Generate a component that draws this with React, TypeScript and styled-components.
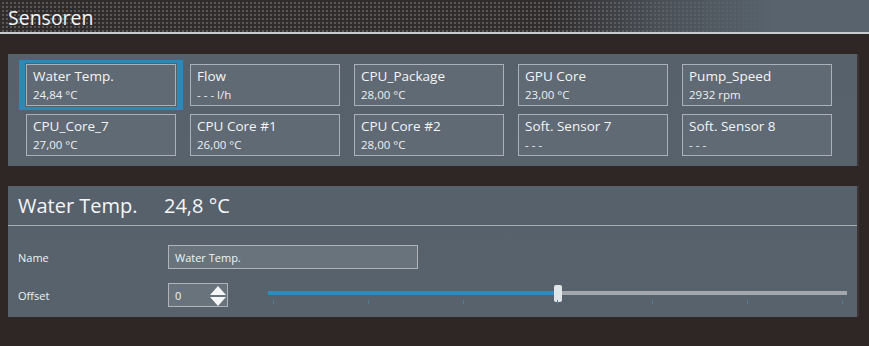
import styled, { createGlobalStyle } from 'styled-components';

const GlobalStyle = createGlobalStyle`
  html, body {
    margin: 0;
    padding: 0;
    background: #2f2725;
  }
  body {
    font-family: "Open Sans", "Noto Sans", sans-serif;
    color: #f2f4f5;
  }
`;

const Page = styled.div`
  width: 869px;
  height: 346px;
  overflow: hidden;
  background: #2f2725;
`;

const TitleBar = styled.div`
  box-sizing: border-box;
  height: 32px;
  border-bottom: 2px solid #c6cbce;
  display: flex;
  align-items: center;
  padding: 3px 0 0 8px;
  font-size: 19.5px;
  color: #f4f5f6;
  background-color: #5b5858;
  background-image:
    linear-gradient(to right, rgba(88, 99, 109, 0) 63%, rgba(88, 99, 109, 0.65) 76%, #58636d 89%),
    linear-gradient(to right, #302c2c 0 2px, transparent 2px),
    linear-gradient(to bottom, #302c2c 0 2px, transparent 2px);
  background-size: 100% 100%, 4px 4px, 4px 4px;
  height: 34px;
`;

const Content = styled.div`
  padding: 20px 12px 0 8px;
  display: flex;
  flex-direction: column;
  gap: 20px;
`;

const Panel = styled.section`
  background: linear-gradient(#56616b, #58626c);
  box-shadow: 2px 0 0 #3a3534;
`;

const SensorGrid = styled.div`
  display: grid;
  grid-template-columns: repeat(5, 150px);
  grid-auto-rows: 42px;
  column-gap: 14px;
  row-gap: 8px;
  padding: 10px 0 10px 18px;
`;

const Tile = styled.div<{ $selected?: boolean }>`
  box-sizing: border-box;
  border: 1px solid #a9b0b7;
  background: #606a74;
  padding: 2px 0 0 6px;
  display: flex;
  flex-direction: column;
  box-shadow: ${({ $selected }) =>
    $selected
      ? '0 0 0 1px #56616b, 0 0 0 4px #2d88b6, -3px 0 0 4px #2d88b6, 3px 0 0 4px #2d88b6'
      : 'none'};
`;

const TileName = styled.span`
  font-size: 13.5px;
  line-height: 19px;
  color: #f3f5f6;
`;

const TileValue = styled.span`
  font-size: 11.5px;
  line-height: 18px;
  color: #eef1f3;
`;

const DetailHeader = styled.div`
  height: 38px;
  border-bottom: 1px solid #a6adb3;
  display: flex;
  align-items: center;
  padding: 0 0 1px 10px;
  font-size: 20px;
  color: #f5f6f7;
`;

const HeaderName = styled.span`
  width: 146px;
`;

const Form = styled.div`
  display: grid;
  grid-template-columns: 150px 1fr;
  grid-auto-rows: 24px;
  row-gap: 14px;
  align-items: center;
  padding: 19px 10px 10px 10px;
`;

const Label = styled.span`
  font-size: 11px;
  color: #eef1f3;
`;

const TextField = styled.div<{ $width: number }>`
  box-sizing: border-box;
  width: ${({ $width }) => $width}px;
  height: 24px;
  border: 1px solid #aeb4ba;
  background: #69737c;
  display: flex;
  align-items: center;
  padding-left: 6px;
  font-size: 11px;
  color: #f2f4f5;
  position: relative;
`;

const OffsetRow = styled.div`
  display: flex;
  align-items: center;
  gap: 40px;
`;

const Spinner = styled.div`
  position: absolute;
  right: 1px;
  top: 2px;
  display: flex;
  flex-direction: column;
  gap: 2px;
`;

const Slider = styled.div`
  flex: 1;
  position: relative;
  height: 24px;
`;

const Track = styled.div`
  position: absolute;
  left: 0;
  right: 0;
  top: 8px;
  height: 4px;
  background: #a3a7ab;
`;

const Fill = styled.div`
  height: 100%;
  background: #2b8cbd;
`;

const Thumb = styled.div`
  position: absolute;
  top: 2px;
  width: 8px;
  height: 17px;
  margin-left: -4px;
  border-radius: 2px;
  background: #e1e5e8;
`;

const Ticks = styled.div`
  position: absolute;
  left: 5px;
  right: 4px;
  top: 17px;
  display: flex;
  justify-content: space-between;
`;

const Tick = styled.span`
  width: 1px;
  height: 4px;
  background: #4f7f93;
`;

const sensors = [
  { name: 'Water Temp.', value: '24,84 °C', selected: true },
  { name: 'Flow', value: '- - - l/h' },
  { name: 'CPU_Package', value: '28,00 °C' },
  { name: 'GPU Core', value: '23,00 °C' },
  { name: 'Pump_Speed', value: '2932 rpm' },
  { name: 'CPU_Core_7', value: '27,00 °C' },
  { name: 'CPU Core #1', value: '26,00 °C' },
  { name: 'CPU Core #2', value: '28,00 °C' },
  { name: 'Soft. Sensor 7', value: '- - -' },
  { name: 'Soft. Sensor 8', value: '- - -' },
];

const sliderPos = 0.5;

function App() {
  return (
    <Page>
      <GlobalStyle />
      <TitleBar>Sensoren</TitleBar>
      <Content>
        <Panel>
          <SensorGrid>
            {sensors.map((s) => (
              <Tile key={s.name} $selected={s.selected}>
                <TileName>{s.name}</TileName>
                <TileValue>{s.value}</TileValue>
              </Tile>
            ))}
          </SensorGrid>
        </Panel>
        <Panel>
          <DetailHeader>
            <HeaderName>Water Temp.</HeaderName>
            <span>24,8 °C</span>
          </DetailHeader>
          <Form>
            <Label>Name</Label>
            <TextField $width={250}>Water Temp.</TextField>
            <Label>Offset</Label>
            <OffsetRow>
              <TextField $width={60}>
                0
                <Spinner>
                  <svg width="16" height="9" viewBox="0 0 16 9">
                    <polygon points="8,0 16,9 0,9" fill="#f4f6f7" />
                  </svg>
                  <svg width="16" height="9" viewBox="0 0 16 9">
                    <polygon points="0,0 16,0 8,9" fill="#f4f6f7" />
                  </svg>
                </Spinner>
              </TextField>
              <Slider>
                <Track>
                  <Fill style={{ width: `${sliderPos * 100}%` }} />
                </Track>
                <Thumb style={{ left: `${sliderPos * 100}%` }} />
                <Ticks>
                  {Array.from({ length: 7 }).map((_, i) => (
                    <Tick key={i} />
                  ))}
                </Ticks>
              </Slider>
            </OffsetRow>
          </Form>
        </Panel>
      </Content>
    </Page>
  );
}

export default App;
